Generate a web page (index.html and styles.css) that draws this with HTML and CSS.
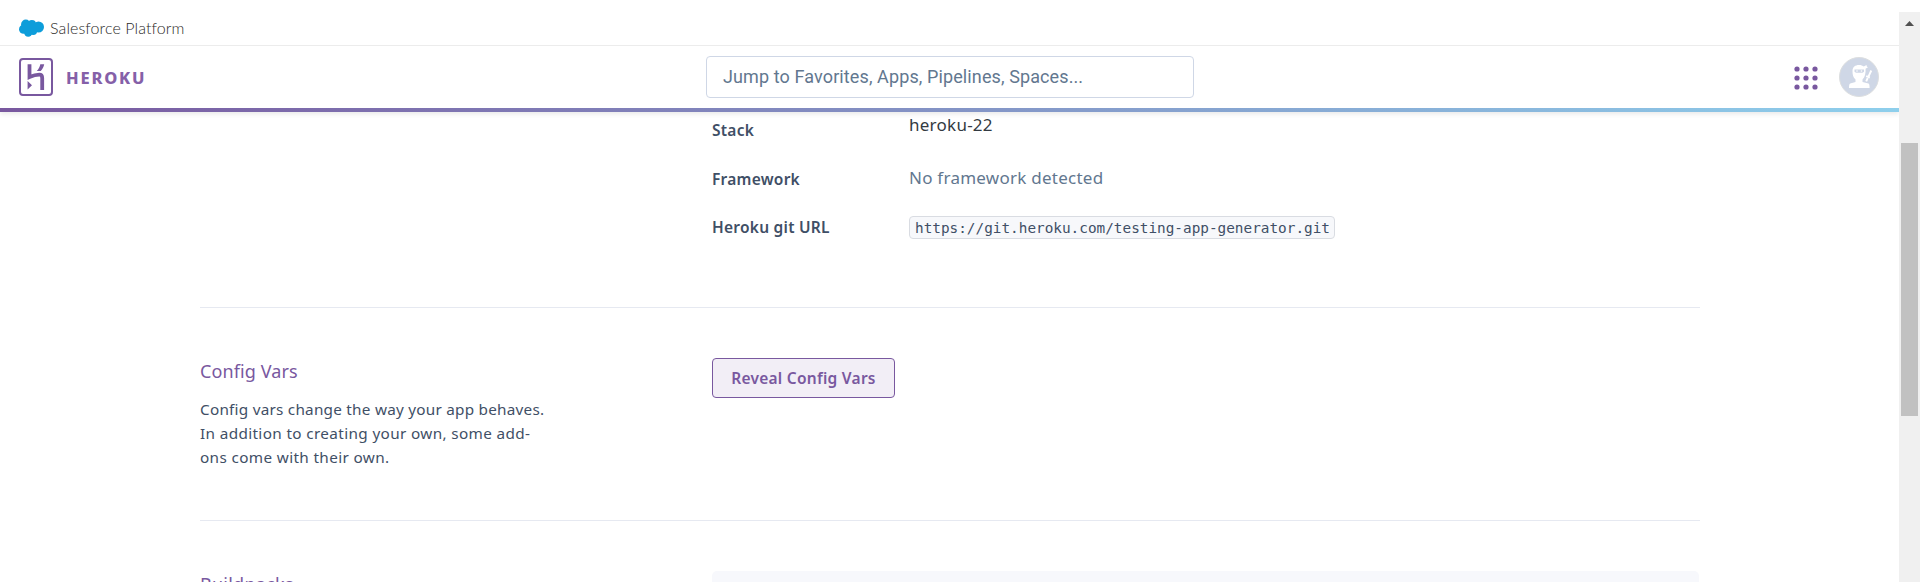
FILE: index.html
```html
<!DOCTYPE html>
<html lang="en">
<head>
<meta charset="utf-8">
<title>Settings | Heroku</title>
<link rel="stylesheet" href="styles.css">
</head>
<body>
<div class="window">
  <div class="page">
    <header class="header">
      <div class="platform-bar">
        <svg class="cloud" width="25" height="18" viewBox="0 0 25 18" fill="#0d9dda"><circle cx="6.8" cy="5.3" r="4.7"/><circle cx="12.9" cy="5.2" r="4.1"/><circle cx="19.5" cy="8" r="5.5"/><circle cx="4.5" cy="10.2" r="4.5"/><circle cx="9.2" cy="13.5" r="4.2"/><circle cx="14.2" cy="12" r="3.9"/><path d="M5 4h12v9H5z"/></svg>
        <span class="platform-name">Salesforce Platform</span>
      </div>
      <div class="nav">
        <a class="brand">
          <svg width="34" height="38" viewBox="0 0 34 38"><rect x="1" y="1" width="32" height="36" rx="3" fill="none" stroke="#79589f" stroke-width="2"/><path d="M10.500 6.300V19C14.600 17.200 17.500 16.600 20.300 16.600c2.200 0 2.900 1.200 2.900 3.300v12" fill="none" stroke="#79589f" stroke-width="3.800"/><path d="M8.600 23l4.400 4.300-4.400 4.300zM21.300 6.300h3.900c-.4 2.500-1.600 4.700-3.500 6.800h-3.900c1.900-2.100 3.100-4.300 3.500-6.800z" fill="#79589f"/></svg>
          <span class="wordmark">HEROKU</span>
        </a>
        <div class="search">Jump to Favorites, Apps, Pipelines, Spaces...</div>
        <div class="actions">
          <svg class="dots" width="24" height="24" viewBox="0 0 24 24" fill="#79589f"><circle cx="3" cy="3" r="2.6"/><circle cx="12" cy="3" r="2.6"/><circle cx="21" cy="3" r="2.6"/><circle cx="3" cy="12" r="2.6"/><circle cx="12" cy="12" r="2.6"/><circle cx="21" cy="12" r="2.6"/><circle cx="3" cy="21" r="2.6"/><circle cx="12" cy="21" r="2.6"/><circle cx="21" cy="21" r="2.6"/></svg>
          <svg width="40" height="40" viewBox="0 0 40 40"><circle cx="20" cy="20" r="19.5" fill="#cfd7e6" stroke="#dcdedf"/><path d="M13.5 14c0-4 2.7-6 6.5-6 2 0 3.700.6 4.800 1.600L27.500 8l.3 1.600 1.200.6-2.400 1.500c.2 4.600-.6 8.500-3.100 10.800v2.500l6 1.400c.9.5 1.100 2.200 1.100 4.600H10c0-2.400.2-4.100 1.200-4.600l5.300-1.400v-2.500C14 20.600 13.500 17.500 13.500 14z" fill="#fff"/><path d="M15.500 12.500h9.500v2.200l-1.500 1h-6.500l-1.500-1z" fill="#cfd7e6"/><circle cx="18" cy="14" r=".8" fill="#fff"/><circle cx="22.500" cy="14" r=".8" fill="#fff"/><path d="M32.300 13.500l-3 6.300M27.200 19l3.600 1.700M28.700 21l-1.500 3.300" stroke="#fff" stroke-width="1.900" fill="none"/></svg>
        </div>
      </div>
      <div class="rule"></div>
    </header>
    <main class="content">
      <section class="section info">
        <div class="aside"></div>
        <dl class="facts">
          <dt>Stack</dt><dd class="stack">heroku-22</dd>
          <dt>Framework</dt><dd class="muted">No framework detected</dd>
          <dt>Heroku git URL</dt><dd><code>https://git.heroku.com/testing-app-generator.git</code></dd>
        </dl>
      </section>
      <section class="section config">
        <div class="aside">
          <h2>Config Vars</h2>
          <p>Config vars change the way your app behaves.<br><span class="loose">In addition to creating your own, some add-<br>ons come with their own.</span></p>
        </div>
        <div><button class="reveal" type="button">Reveal Config Vars</button></div>
      </section>
      <section class="section buildpacks">
        <div class="aside"><h2>Buildpacks</h2></div>
        <div class="panel"></div>
      </section>
    </main>
  </div>
  <div class="scrollbar">
    <svg width="9" height="5" viewBox="0 0 9 5"><path d="M0 5L4.500 0 9 5z" fill="#505050"/></svg>
    <div class="thumb"></div>
  </div>
</div>
</body>
</html>
```
FILE: styles.css
```css
* { box-sizing: border-box; }
body { margin: 0; background: #fff; font-family: "Noto Sans", "Open Sans", sans-serif; color: #3f4f66; }
.window { display: flex; height: 582px; overflow: hidden; }
.page { width: 1899px; height: 582px; overflow: hidden; }
.header { height: 112px; box-shadow: 0 2px 5px rgba(0, 0, 0, .09); }
.platform-bar { height: 46px; padding: 18px 0 0 19px; display: flex; gap: 6px; border-bottom: 1px solid #ececec; }
.cloud { margin-top: 1px; }
.platform-name { font: 300 16px/20px "Lato", sans-serif; letter-spacing: .1px; color: #2b2a28; }
.nav { height: 62px; padding: 0 20px 0 19px; display: grid; grid-template-columns: 687px 488px 1fr; align-items: center; }
.brand { display: flex; align-items: center; gap: 13px; }
.wordmark { font-size: 16.5px; font-weight: 800; line-height: 20px; letter-spacing: 1.8px; color: #8560a8; padding-top: 2px; }
.search { height: 42px; border: 1px solid #cfd7e6; border-radius: 4px; padding-left: 16px; font: 18px/40px Roboto, sans-serif; letter-spacing: .11px; color: #62778f; }
.actions { display: flex; justify-content: flex-end; align-items: center; gap: 21px; }
.dots { margin-top: 1px; }
.rule { height: 4px; background: linear-gradient(to right, #79589f, #8ecfec); }
.content { width: 1500px; margin-left: 200px; }
.section { display: grid; grid-template-columns: 512px 1fr; border-bottom: 1px solid #e6e9f1; }
.info { height: 196px; }
.facts { margin: 0; display: grid; grid-template-columns: 197px 1fr; grid-template-rows: 49px 48px 49px; padding-top: 6px; line-height: 24px; }
dt { font-size: 15.5px; font-weight: 600; letter-spacing: .25px; }
dd { margin: -1px 0 0; font-size: 17px; letter-spacing: .25px; }
dd.stack { margin-top: -5px; color: #333a42; }
.muted { color: #62778f; }
code { display: block; width: 426px; height: 23px; margin-top: 2px; padding-left: 5px; border: 1px solid #d9dce2; border-radius: 4px; background: #f7f8fb; font: 14.36px/22px "DejaVu Sans Mono", monospace; letter-spacing: 0; white-space: nowrap; }
.config { height: 213px; padding-top: 50px; }
h2 { margin: -1px 0 0; font-size: 18px; line-height: 28px; font-weight: 400; letter-spacing: .1px; color: #79589f; }
p { margin: 12px 0 0; font-size: 15.3px; line-height: 24px; letter-spacing: .24px; }
.loose { letter-spacing: .36px; }
.reveal { width: 183px; height: 40px; border: 1px solid #79589f; border-radius: 4px; background: #f2eef6; padding: 0; font: 600 15.5px/38px "Noto Sans", sans-serif; letter-spacing: .26px; color: #79589f; display: block; }
.buildpacks { padding-top: 50px; border: 0; }
.buildpacks h2 { letter-spacing: .25px; }
.panel { height: 60px; border-radius: 5px; background: #f7f8fc; width: 987px; }
.scrollbar { width: 21px; height: 570px; margin-top: 12px; padding: 9px 0 0 2px; background: #f0f0f0; display: flex; flex-direction: column; }
.scrollbar svg { margin-left: 4px; }
.thumb { width: 17px; height: 273px; margin-top: 117px; background: #c1c1c1; }
```
